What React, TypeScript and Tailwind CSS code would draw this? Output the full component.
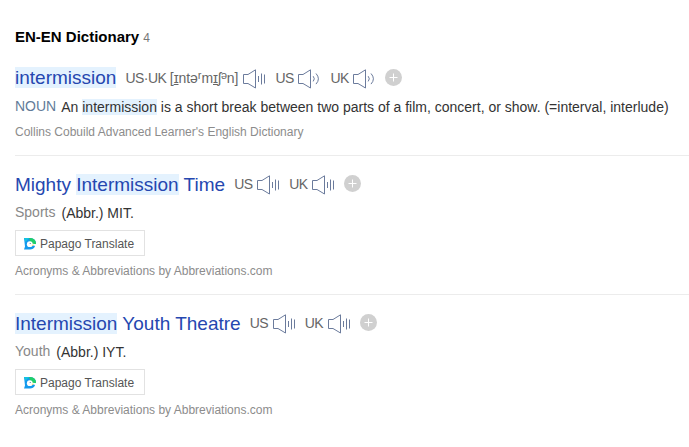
import type { ReactNode } from "react";

function Mark({ children }: { children: ReactNode }) {
  return <mark className="bg-[#e4f2fe] text-inherit">{children}</mark>;
}

function Speaker({ waves = false }: { waves?: boolean }) {
  return (
    <svg width="24" height="20" viewBox="0 0 24 20" fill="none" stroke="#6b7b9c" className="shrink-0">
      <path d="M.5 5.5H5L12.5.8v18.2L5 14.5H.5z" />
      {waves ? (
        <path d="M15.2 7.2q2.2 2.6 0 5.2M18 4.5q4.8 5.3 0 10.6" />
      ) : (
        <path d="M15.5 7v6M18.5 4.5v11M21.5 5.5v9" />
      )}
    </svg>
  );
}

function Plus() {
  return (
    <svg width="17" height="17" viewBox="0 0 17 17" className="shrink-0">
      <circle cx="8.5" cy="8.5" r="8.5" fill="#d0d0d0" />
      <path d="M8.5 4.5v8M4.5 8.5h8" stroke="#fff" />
    </svg>
  );
}

function Sound({ label, waves }: { label: ReactNode; waves?: boolean }) {
  return (
    <span className="flex h-5 text-[14px] leading-[18px] tracking-[-0.5px] text-[#666]">
      <span className="mr-1 min-w-[19px] whitespace-nowrap">{label}</span>
      <Speaker waves={waves} />
    </span>
  );
}

function Title({ children }: { children: ReactNode }) {
  return <h3 className="mr-[9px] text-[19px] leading-[22px] whitespace-nowrap text-[#2547b0]">{children}</h3>;
}

function Papago() {
  return (
    <button className="mt-[9px] flex h-[26px] w-[130px] items-center border border-[#e2e2e2] pl-2 text-[12px] text-[#555]">
      <svg width="12" height="12" viewBox="0 0 12 12" className="mt-px mr-1">
        <path d="M0 0h6.5a5.5 5.5 0 0 1 5.5 5.5L9 6l2 2.5Q9.5 11.5 6 11.5H0l1-3z" fill="#1499ed" />
        <path d="M5 0h1.5A5.5 5.5 0 0 1 12 6L8 6.5 6 3z" fill="#20cf68" />
        <path d="M0 0h5L1.5 4z" fill="#13c5df" />
        <circle cx="5.8" cy="6.2" r="2.9" fill="#fff" />
        <path d="m7 5.5 5 .7L8.5 8z" fill="#fff" />
        <path d="m7.5 7 2-.5-.6 1.5z" fill="#ffd53d" />
        <circle cx="6.2" cy="5.4" r=".5" fill="#234e87" />
      </svg>
      <span className="mt-[2px]">Papago Translate</span>
    </button>
  );
}

function Abbreviation({ title, field, abbr }: { title: ReactNode; field: string; abbr: string }) {
  return (
    <article className="h-[139px] border-t border-[#ececec] pt-[18px]">
      <div className="flex h-[22px] items-start">
        <Title>{title}</Title>
        <div className="mt-px flex items-start gap-2">
          <Sound label="US" />
          <Sound label="UK" />
          <Plus />
        </div>
      </div>
      <p className="mt-[7px] flex h-[18px] text-[14px] leading-[18px] text-[#333]">
        <span className="mr-[6px] text-[#888]">{field}</span>
        <span className="pt-px">{abbr}</span>
      </p>
      <Papago />
      <p className="mt-[7px] text-[12px] leading-[16px] text-[#8c8c8c]">Acronyms &amp; Abbreviations by Abbreviations.com</p>
    </article>
  );
}

export default function App() {
  return (
    <main className="h-[447px] overflow-hidden bg-white pt-[28px] pl-[15px] font-['Liberation_Sans',Arial,sans-serif]">
      <h2 className="flex h-[18px] items-baseline text-[15px] leading-[18px] font-bold text-black">
        EN-EN Dictionary<span className="ml-1 text-[12px] font-normal text-[#777]">4</span>
      </h2>
      <article className="h-[109px] pt-[21px]">
        <div className="flex h-[22px] items-start">
          <Title><Mark>intermission</Mark></Title>
          <div className="mt-[2px] flex items-start gap-2">
            <Sound
              label={
                <span className="inline-block w-[114px]">
                  US·UK <span className="tracking-[-0.1px]">[<u>ɪ</u>ntə<span className="text-[16px] leading-none">ʳ</span>m<u>ɪ</u>ʃ<span className="text-[16px] leading-none">ᵊ</span>n]</span>
                </span>
              }
            />
            <Sound label="US" waves />
            <Sound label="UK" waves />
            <Plus />
          </div>
        </div>
        <p className="mt-[8px] flex h-[18px] text-[14px] leading-[18px] whitespace-nowrap text-[#333]">
          <span className="mr-[5px] text-[#627b99]">NOUN</span>
          <span className="pt-px">
            An <Mark>intermission</Mark> is a short break between two parts of a film, concert, or show. (=interval, interlude)
          </span>
        </p>
        <p className="mt-[9px] text-[12px] leading-[16px] text-[#8c8c8c]">Collins Cobuild Advanced Learner's English Dictionary</p>
      </article>
      <Abbreviation title={<>Mighty <Mark>Intermission</Mark> Time</>} field="Sports" abbr="(Abbr.) MIT." />
      <Abbreviation title={<><Mark>Intermission</Mark> Youth Theatre</>} field="Youth" abbr="(Abbr.) IYT." />
    </main>
  );
}
